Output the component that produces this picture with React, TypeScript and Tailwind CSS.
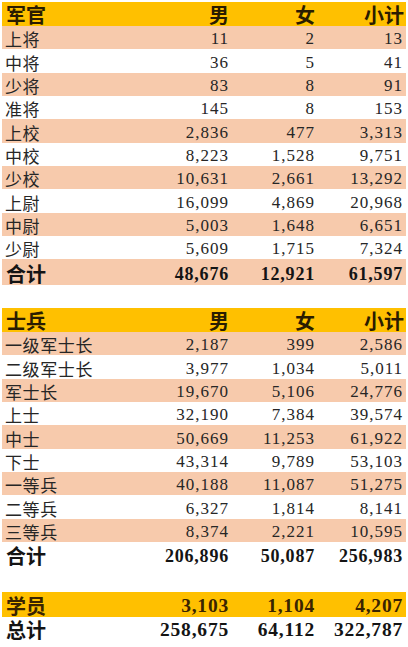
type Row = { label: string; m: string; f: string; t: string };

const officers: Row[] = [
  { label: '上将', m: '11', f: '2', t: '13' },
  { label: '中将', m: '36', f: '5', t: '41' },
  { label: '少将', m: '83', f: '8', t: '91' },
  { label: '准将', m: '145', f: '8', t: '153' },
  { label: '上校', m: '2,836', f: '477', t: '3,313' },
  { label: '中校', m: '8,223', f: '1,528', t: '9,751' },
  { label: '少校', m: '10,631', f: '2,661', t: '13,292' },
  { label: '上尉', m: '16,099', f: '4,869', t: '20,968' },
  { label: '中尉', m: '5,003', f: '1,648', t: '6,651' },
  { label: '少尉', m: '5,609', f: '1,715', t: '7,324' },
];

const soldiers: Row[] = [
  { label: '一级军士长', m: '2,187', f: '399', t: '2,586' },
  { label: '二级军士长', m: '3,977', f: '1,034', t: '5,011' },
  { label: '军士长', m: '19,670', f: '5,106', t: '24,776' },
  { label: '上士', m: '32,190', f: '7,384', t: '39,574' },
  { label: '中士', m: '50,669', f: '11,253', t: '61,922' },
  { label: '下士', m: '43,314', f: '9,789', t: '53,103' },
  { label: '一等兵', m: '40,188', f: '11,087', t: '51,275' },
  { label: '二等兵', m: '6,327', f: '1,814', t: '8,141' },
  { label: '三等兵', m: '8,374', f: '2,221', t: '10,595' },
];

const cjk = "font-['Noto_Sans_CJK_SC',sans-serif]";
const serif = "font-['Liberation_Serif','Noto_Sans_CJK_SC',serif] text-right";
const num = `${serif} text-[17px] tracking-[1px] leading-[20px]`;

// 表头：金色底，粗体
function Header({ title }: { title: string }) {
  return (
    <div className="grid grid-cols-[120px_107px_86px_91px] h-[24px] items-end bg-[#ffc000] text-[#2a1c00]">
      <div className={`${cjk} pl-[4px] text-[20px] font-bold leading-[22px]`}>{title}</div>
      <div className={`${cjk} text-right text-[20px] font-bold leading-[22px]`}>男</div>
      <div className={`${cjk} text-right text-[20px] font-bold leading-[22px]`}>女</div>
      <div className={`${cjk} text-right pr-[2px] text-[20px] font-bold leading-[22px]`}>小计</div>
    </div>
  );
}

function DataRow({ row, shaded }: { row: Row; shaded: boolean }) {
  return (
    <div
      className={`grid grid-cols-[120px_107px_86px_91px] h-[23.35px] items-end text-[#262626] ${
        shaded ? 'bg-[#f7caac]' : 'bg-white'
      }`}
    >
      <div className={`${cjk} pl-[3px] text-[17px] tracking-[0.6px] leading-[20px]`}>{row.label}</div>
      <div className={num}>{row.m}</div>
      <div className={num}>{row.f}</div>
      <div className={`${num} pr-[3px]`}>{row.t}</div>
    </div>
  );
}

function TotalRow({ row, cls, big }: { row: Row; cls: string; big?: boolean }) {
  const n = big
    ? `${serif} font-bold text-[19.5px] tracking-[0.8px] leading-[22px]`
    : `${serif} font-bold text-[18px] tracking-[0.8px] leading-[21px]`;
  return (
    <div className={`grid grid-cols-[120px_107px_86px_91px] h-[24.5px] items-end ${cls}`}>
      <div className={`${cjk} pl-[4px] text-[20px] font-bold leading-[22px]`}>{row.label}</div>
      <div className={n}>{row.m}</div>
      <div className={n}>{row.f}</div>
      <div className={`${n} pr-[3px]`}>{row.t}</div>
    </div>
  );
}

export default function App() {
  return (
    <main className="w-[408px] h-[647px] bg-white pt-[2px] pl-[2px] overflow-hidden">
      <div className="w-[404px] flex flex-col">
        {/* 军官 */}
        <Header title="军官" />
        {officers.map((r, i) => (
          <DataRow key={r.label} row={r} shaded={i % 2 === 0} />
        ))}
        <TotalRow
          row={{ label: '合计', m: '48,676', f: '12,921', t: '61,597' }}
          cls="bg-[#f7caac] text-[#141414] h-[25.5px]"
        />

        <div className="h-[23px]" />

        {/* 士兵 */}
        <Header title="士兵" />
        {soldiers.map((r, i) => (
          <DataRow key={r.label} row={r} shaded={i % 2 === 0} />
        ))}
        <TotalRow
          row={{ label: '合计', m: '206,896', f: '50,087', t: '256,983' }}
          cls="bg-white text-[#141414]"
        />

        <div className="h-[25.5px]" />

        <TotalRow
          row={{ label: '学员', m: '3,103', f: '1,104', t: '4,207' }}
          cls="bg-[#ffc000] text-[#3a2400] h-[23.5px]"
          big
        />
        <TotalRow
          row={{ label: '总计', m: '258,675', f: '64,112', t: '322,787' }}
          cls="bg-white text-[#141414]"
          big
        />
      </div>
    </main>
  );
}
